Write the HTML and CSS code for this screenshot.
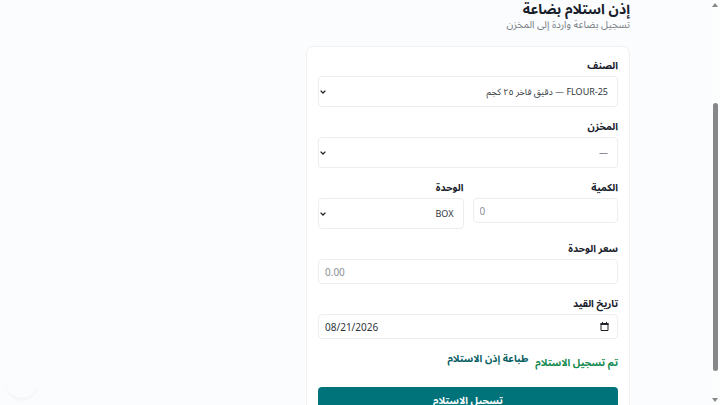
FILE: index.html
```html
<!DOCTYPE html>
<html lang="ar" dir="rtl">
<head>
<meta charset="utf-8">
<meta name="viewport" content="width=device-width, initial-scale=1">
<title>إذن استلام بضاعة</title>
<link rel="stylesheet" href="styles.css">
</head>
<body>
<main class="page">
  <header class="heading">
    <h1>إذن استلام بضاعة</h1>
    <p>تسجيل بضاعة واردة إلى المخزن</p>
  </header>
  <form class="card">
    <div class="field">
      <label for="item">الصنف</label>
      <div class="select-box">
        <select id="item"><option>FLOUR-25 — دقيق فاخر ٢٥ كجم</option></select>
        <svg class="chevron" viewBox="0 0 6 4" aria-hidden="true"><path d="M.6.6 3 3 5.4.6"/></svg>
      </div>
    </div>
    <div class="field">
      <label for="store">المخزن</label>
      <div class="select-box">
        <select id="store"><option>—</option></select>
        <svg class="chevron" viewBox="0 0 6 4" aria-hidden="true"><path d="M.6.6 3 3 5.4.6"/></svg>
      </div>
    </div>
    <div class="pair">
      <div class="field">
        <label for="qty">الكمية</label>
        <input id="qty" type="text" inputmode="decimal" dir="ltr" placeholder="0">
      </div>
      <div class="field">
        <label for="unit">الوحدة</label>
        <div class="select-box">
          <select id="unit"><option>BOX</option></select>
          <svg class="chevron" viewBox="0 0 6 4" aria-hidden="true"><path d="M.6.6 3 3 5.4.6"/></svg>
        </div>
      </div>
    </div>
    <div class="field">
      <label for="price">سعر الوحدة</label>
      <input id="price" type="text" inputmode="decimal" dir="ltr" placeholder="0.00">
    </div>
    <div class="field">
      <label for="date">تاريخ القيد</label>
      <div class="date-box" dir="ltr">
        <input id="date" type="text" value="08/21/2026">
        <svg class="calendar" viewBox="0 0 9 9" aria-hidden="true"><path d="M1 1.5h7v7H1z"/><path class="calendar-top" d="M.5 1h8v2h-8zM2 0h1v1H2zM6 0h1v1H6z"/></svg>
      </div>
    </div>
    <div class="result">
      <p class="success" role="status">تم تسجيل الاستلام</p>
      <a href="#print">طباعة إذن الاستلام</a>
    </div>
    <button class="submit" type="submit">تسجيل الاستلام</button>
  </form>
</main>
<div class="scroll-track" aria-hidden="true">
  <span class="arrow arrow-up"></span>
  <span class="thumb"></span>
  <span class="arrow arrow-down"></span>
</div>
<div class="floating" aria-hidden="true"></div>
</body>
</html>
```
FILE: styles.css
```css
* {
  box-sizing: border-box;
}

html {
  height: 100%;
  overflow: hidden;
  background: #fafcfe;
}

body {
  margin: 0;
  color: #17202a;
  font-family: "Noto Sans", "Noto Sans Arabic", "DejaVu Sans", sans-serif;
  font-size: 10px;
  line-height: 18px;
}

.page {
  width: 45%;
  margin-right: 90px;
}

h1,
p {
  margin: 0;
}

h1 {
  font-size: 14px;
  line-height: 17px;
}

.heading p {
  color: #777c82;
  font-size: 10px;
  line-height: 14px;
}

.card {
  display: flex;
  flex-direction: column;
  gap: 10px;
  margin-top: 15px;
  padding: 9px 11px 12px;
  background: #fff;
  border: 1px solid #eff1f3;
  border-radius: 7px;
}

.field {
  display: flex;
  flex-direction: column;
  gap: 2px;
}

.field label {
  font-weight: 700;
}

.pair {
  display: grid;
  grid-template-columns: 1fr 1fr;
  gap: 9px;
}

input,
select,
button {
  width: 100%;
  margin: 0;
  font: inherit;
}

input,
select {
  color: #30353a;
  background: #fff;
  border: 1px solid #ebedef;
  border-radius: 4px;
}

input {
  height: 25px;
  padding: 0 6px;
}

input::placeholder {
  color: #8d9195;
}

select {
  display: block;
  height: 31px;
  padding: 0 9px;
  font-size: 9px;
  appearance: none;
}

.select-box,
.date-box {
  position: relative;
}

.date-box input {
  display: block;
}

.chevron {
  position: absolute;
  left: 2px;
  top: 50%;
  width: 6px;
  height: 4px;
  margin-top: -2px;
  fill: none;
  stroke: #202428;
  stroke-width: 1.3;
}

.calendar {
  position: absolute;
  right: 9px;
  top: 8px;
  width: 9px;
  height: 9px;
  fill: none;
  stroke: #202428;
}

.calendar-top {
  fill: #202428;
  stroke: none;
}

.result {
  display: flex;
  align-items: flex-start;
  gap: 7px;
  font-weight: 700;
}

.success {
  padding-top: 4px;
  color: #12894f;
}

.result a {
  color: #075e62;
  text-decoration: none;
}

.submit {
  margin-top: 6px;
  padding: 4px;
  color: #fff;
  font-size: 10px;
  font-weight: 700;
  background: #00727a;
  border: 0;
  border-radius: 4px;
}

.scroll-track {
  position: fixed;
  top: 0;
  right: 0;
  bottom: 0;
  width: 9px;
  background: #fcfdfd;
}

.thumb {
  position: absolute;
  top: 25.5%;
  right: 2px;
  width: 5px;
  height: 66%;
  background: #868788;
  border-radius: 3px;
}

.arrow {
  position: absolute;
  right: 2px;
  border: 3px solid transparent;
}

.arrow-up {
  top: 0;
  border-bottom: 4px solid #868788;
}

.arrow-down {
  bottom: 0;
  border-top: 4px solid #868788;
}

.floating {
  position: fixed;
  left: 6px;
  bottom: 7px;
  width: 32px;
  height: 32px;
  background: #fafcfe;
  border-radius: 50%;
  box-shadow: 0 3px 4px -2px #eceef0;
  clip-path: inset(20px -6px -8px);
}
```
